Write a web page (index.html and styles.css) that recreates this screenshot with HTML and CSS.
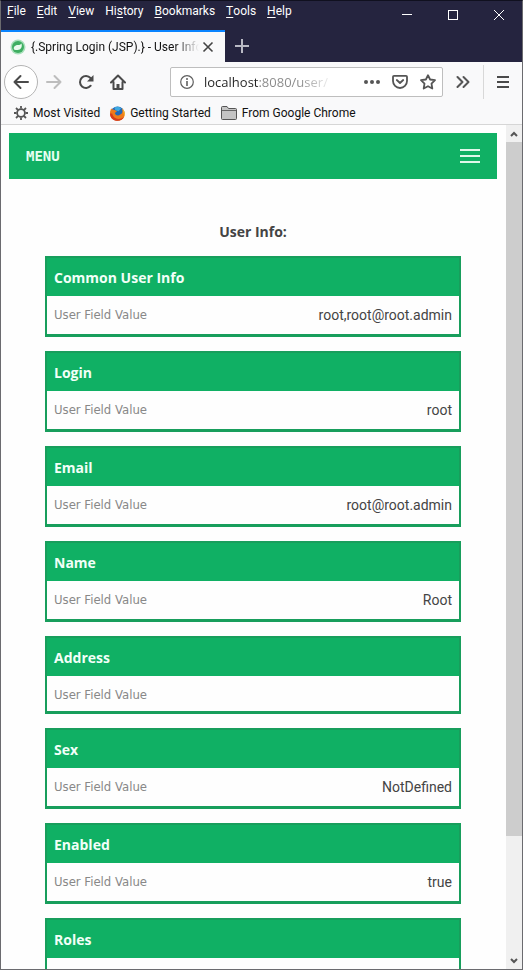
FILE: index.html
```html
<!DOCTYPE html>
<html lang="en">
<head>
<meta charset="utf-8">
<meta name="viewport" content="width=device-width, initial-scale=1">
<title>{.Spring Login (JSP).} - User Info</title>
<link rel="stylesheet" href="styles.css">
</head>
<body>
<div class="window">
  <header class="titlebar">
    <div class="top-row">
      <nav class="app-menu" aria-label="Application">
        <button><u>F</u>ile</button>
        <button><u>E</u>dit</button>
        <button><u>V</u>iew</button>
        <button>Hi<u>s</u>tory</button>
        <button><u>B</u>ookmarks</button>
        <button><u>T</u>ools</button>
        <button><u>H</u>elp</button>
      </nav>
      <div class="window-controls">
        <button aria-label="Minimize"><svg width="10" height="10" viewBox="0 0 10 10"><path d="M0 4.500h10" stroke="#fff"/></svg></button>
        <button aria-label="Maximize"><svg width="10" height="10" viewBox="0 0 10 10"><rect x=".5" y=".5" width="9" height="9" fill="none" stroke="#fff"/></svg></button>
        <button aria-label="Close"><svg width="10" height="10" viewBox="0 0 10 10"><path d="M0 0l10 10M10 0L0 10" stroke="#fff"/></svg></button>
      </div>
    </div>
    <div class="tabs">
      <div class="tab">
        <svg width="16" height="16" viewBox="0 0 16 16"><circle cx="8" cy="8" r="7.500" fill="#a9e0bb"/><circle cx="8" cy="8" r="6" fill="#3fae62"/><path d="M4 10.500c-1-3 1.500-4.500 4-4.500 1.500 0 2.500-.3 3.500-1.500 1 3.500-.5 6.500-4 6.500-1.500 0-2.500 0-3.500-.5z" fill="#e9faee"/></svg>
        <span class="tab-title">{.Spring Login (JSP).} - User Info</span>
        <button class="tab-close" aria-label="Close tab"><svg width="12" height="12" viewBox="0 0 12 12"><path d="M1.500 1.500l9 9M10.500 1.500l-9 9" stroke="#444" stroke-width="1.600"/></svg></button>
      </div>
      <button class="new-tab" aria-label="New tab"><svg width="14" height="14" viewBox="0 0 14 14"><path d="M7 0v14M0 7h14" stroke="#b9b9c4" stroke-width="2"/></svg></button>
    </div>
  </header>

  <div class="toolbar">
    <button class="back" aria-label="Back"><svg width="16" height="16" viewBox="0 0 16 16" fill="none" stroke="#4a4a4a" stroke-width="2" stroke-linecap="round" stroke-linejoin="round"><path d="M15 8H1.500M7.500 2l-6 6 6 6"/></svg></button>
    <button class="tool" aria-label="Forward" disabled><svg width="16" height="16" viewBox="0 0 16 16" fill="none" stroke="#bdbdbd" stroke-width="2" stroke-linecap="round" stroke-linejoin="round"><path d="M1 8h13.500M8.500 2l6 6-6 6"/></svg></button>
    <button class="tool" aria-label="Reload"><svg width="16" height="16" viewBox="0 0 16 16"><path d="M12.700 11.700A6 6 0 1 1 12.500 4" fill="none" stroke="#4a4a4a" stroke-width="2" stroke-linecap="round"/><path d="M15.500 1v6.500H9z" fill="#4a4a4a"/></svg></button>
    <button class="tool" aria-label="Home"><svg width="16" height="16" viewBox="0 0 16 16" fill="none" stroke="#4a4a4a" stroke-width="2" stroke-linecap="round" stroke-linejoin="round"><path d="M1 8.500l7-7 7 7M3.500 8v7h9V8"/><path d="M8 10v4.500" stroke-width="3" stroke-linecap="butt"/></svg></button>
    <div class="urlbar">
      <svg width="14" height="14" viewBox="0 0 14 14"><circle cx="7" cy="7" r="6.300" fill="none" stroke="#5f5f5f" stroke-width="1.200"/><path d="M7 6v5" stroke="#5f5f5f" stroke-width="1.600"/><circle cx="7" cy="3.900" r="1" fill="#5f5f5f"/></svg>
      <input class="url" type="text" aria-label="Address" value="localhost:8080/user/">
      <button aria-label="Page actions"><svg width="16" height="16" viewBox="0 0 16 16" fill="#555"><circle cx="2" cy="8" r="2"/><circle cx="8" cy="8" r="2"/><circle cx="14" cy="8" r="2"/></svg></button>
      <button aria-label="Save to Pocket"><svg width="16" height="16" viewBox="0 0 16 16" fill="none" stroke="#555" stroke-width="1.800" stroke-linecap="round" stroke-linejoin="round"><path d="M2 1.800h12q1 0 1 1V7a7 7 0 0 1-14 0V2.800q0-1 1-1z"/><path d="M4.800 6L8 9l3.200-3"/></svg></button>
      <button aria-label="Bookmark this page"><svg width="16" height="16" viewBox="0 0 16 16" fill="none" stroke="#555" stroke-width="1.800" stroke-linejoin="round"><path d="M8 1.200l2.100 4.300 4.900.7-3.500 3.400.8 4.900L8 12.200l-4.300 2.300.8-4.900L1 6.200l4.900-.7z"/></svg></button>
    </div>
    <button class="more" aria-label="More tools"><svg width="14" height="14" viewBox="0 0 14 14" fill="none" stroke="#555" stroke-width="2" stroke-linecap="round" stroke-linejoin="round"><path d="M1.500 2l5 5-5 5M7.500 2l5 5-5 5"/></svg></button>
    <button class="main-menu" aria-label="Open menu"><svg width="12" height="12" viewBox="0 0 12 12"><path d="M0 1h12M0 6h12M0 11h12" stroke="#4a4a4a" stroke-width="2"/></svg></button>
  </div>

  <nav class="bookmarks" aria-label="Bookmarks">
    <a href="#"><svg width="14" height="14" viewBox="0 0 14 14" fill="none" stroke="#555"><circle cx="7" cy="7" r="3.900" stroke-width="1.800"/><path d="M7 0v2.500M7 11.500V14M0 7h2.500M11.500 7H14M2 2l1.900 1.900M10.100 10.100L12 12M12 2l-1.900 1.900M3.900 10.100L2 12" stroke-width="1.800"/></svg>Most Visited</a>
    <a href="#"><svg width="15" height="15" viewBox="0 0 14 14"><circle cx="7" cy="7" r="6.500" fill="#2268b8"/><path d="M4 1.500c2-1.500 5-1 6.500.5L8 5 5 4z" fill="#3fa9e0"/><path d="M1.200 2C1.500 3 2 3.200 3 3.200c1 .2 2.500.8 3.500 1.800L4.500 6.500C5 9 8 9.500 9.500 8 12 7.500 12 4 11 2c2.500 2 3.500 5 2.200 8A7 7 0 0 1 0 7c0-2 .5-3.500 1.200-5z" fill="#ef7b1c"/><path d="M0 7c0 8 11 9 13.200 3C9 13.500 3 12.500 2 7z" fill="#d93a1c"/><path d="M11 2c2.500 2 3.500 5 2.200 8C13 7 12.500 4 11 2z" fill="#fbc02d"/></svg>Getting Started</a>
    <a href="#"><svg width="16" height="14" viewBox="0 0 16 14"><path d="M.5 12.500v-11q0-1 1-1h4.500l1.500 2h7q1 0 1 1v9q0 1-1 1h-13q-1 0-1-1z" fill="#c4c4c4" stroke="#555"/><path d="M1 4.500h14" stroke="#666"/></svg>From Google Chrome</a>
  </nav>

  <div class="viewport">
    <main class="page">
      <div class="site-menu">
        <span>MENU</span>
        <button aria-label="Toggle menu"><svg width="20" height="14" viewBox="0 0 20 14"><path d="M0 1h20M0 7h20M0 13h20" stroke="#dff8ea" stroke-width="2"/></svg></button>
      </div>
      <h1>User Info:</h1>
      <div class="cards">
        <section class="card"><h2>Common User Info</h2><div class="field"><span class="label">User Field Value</span><span class="value">root,root@root.admin</span></div></section>
        <section class="card"><h2>Login</h2><div class="field"><span class="label">User Field Value</span><span class="value">root</span></div></section>
        <section class="card"><h2>Email</h2><div class="field"><span class="label">User Field Value</span><span class="value">root@root.admin</span></div></section>
        <section class="card"><h2>Name</h2><div class="field"><span class="label">User Field Value</span><span class="value">Root</span></div></section>
        <section class="card"><h2>Address</h2><div class="field"><span class="label">User Field Value</span></div></section>
        <section class="card"><h2>Sex</h2><div class="field"><span class="label">User Field Value</span><span class="value">NotDefined</span></div></section>
        <section class="card"><h2>Enabled</h2><div class="field"><span class="label">User Field Value</span><span class="value">true</span></div></section>
        <section class="card"><h2>Roles</h2><div class="field"></div></section>
      </div>
    </main>
    <div class="scrollbar">
      <button aria-label="Scroll up"><svg width="8" height="6" viewBox="0 0 8 6"><path d="M1 5l3-3 3 3" fill="none" stroke="#555" stroke-width="2"/></svg></button>
      <div class="track"><div class="thumb"></div></div>
      <button aria-label="Scroll down"><svg width="8" height="6" viewBox="0 0 8 6"><path d="M1 1l3 3 3-3" fill="none" stroke="#555" stroke-width="2"/></svg></button>
    </div>
  </div>
</div>
</body>
</html>
```
FILE: styles.css
```css
* { box-sizing: border-box; }

body {
  margin: 0;
  font-family: Roboto, "Open Sans", sans-serif;
  font-size: 12px;
  color: #111;
}

button {
  display: flex;
  align-items: center;
  justify-content: center;
  padding: 0;
  border: 0;
  background: none;
  color: inherit;
  font: inherit;
}

svg { display: block; flex: none; }

.window {
  display: flex;
  flex-direction: column;
  height: 100vh;
  overflow: hidden;
  border: 1px solid #6b6b6f;
  border-top-color: #10101f;
}

/* Title bar */
.titlebar { background: #25243f; color: #fff; }

.top-row {
  display: flex;
  justify-content: space-between;
  height: 29px;
}

.app-menu {
  display: flex;
  gap: 11px;
  height: 20px;
  padding-left: 6px;
}

.app-menu u { text-underline-offset: 2px; }

.window-controls { display: flex; }
.window-controls button { width: 46px; height: 28px; }

.tabs { display: flex; height: 32px; }

.tab {
  display: flex;
  align-items: center;
  width: 224px;
  padding: 0 10px 0 9px;
  gap: 5px;
  border-top: 2px solid #0a84ff;
  background: #f9f9fa;
  color: #111;
}

.tab-title {
  flex: 1;
  min-width: 0;
  margin-right: -3px;
  overflow: hidden;
  white-space: nowrap;
  -webkit-mask-image: linear-gradient(to left, transparent, #000 24px);
  mask-image: linear-gradient(to left, transparent, #000 24px);
}

.tab-close { width: 14px; height: 16px; }
.new-tab { width: 34px; }

/* Navigation toolbar */
.toolbar {
  display: flex;
  align-items: center;
  height: 40px;
  padding-left: 3px;
  background: #f9f9fa;
}

.back {
  width: 34px;
  height: 34px;
  border: 1px solid #b4b4b4;
  border-radius: 50%;
  background: #fff;
}

.tool { width: 32px; height: 32px; }

.urlbar {
  display: flex;
  align-items: center;
  flex: 1;
  min-width: 0;
  height: 30px;
  margin-left: 36px;
  padding: 0 6px 0 9px;
  border: 1px solid #bebebe;
  border-radius: 2px;
  background: #fff;
}

.urlbar button { width: 28px; height: 28px; }
.urlbar button:last-child { width: 16px; margin: 0 0 0 6px; }

.url {
  flex: 1;
  min-width: 0;
  height: 28px;
  margin: 0 22px 0 10px;
  padding: 0;
  border: 0;
  outline: 0;
  font: 13px "Open Sans", "Noto Sans", sans-serif;
  color: transparent;
  background: linear-gradient(to right, #222 55px, #888 55px, #888 95px, transparent 130px);
  -webkit-background-clip: text;
  background-clip: text;
}

.more { width: 40px; height: 32px; }

.main-menu {
  width: 39px;
  height: 34px;
  border-left: 1px solid #d8d8d8;
}

/* Bookmarks toolbar */
.bookmarks {
  display: flex;
  gap: 10px;
  height: 23px;
  padding: 0 13px;
  border-bottom: 1px solid #d6d6d6;
  background: #f9f9fa;
}

.bookmarks a {
  display: flex;
  align-items: center;
  gap: 5px;
  color: #111;
  text-decoration: none;
  white-space: nowrap;
}

/* Web page */
.viewport {
  display: flex;
  flex: 1;
  min-height: 0;
  background: #fefefe;
}

.page {
  flex: 1;
  min-width: 0;
  overflow: hidden;
  padding: 8px 9px 8px 8px;
  font-family: "Open Sans", "Noto Sans", sans-serif;
}

.site-menu {
  display: flex;
  align-items: center;
  justify-content: space-between;
  height: 46px;
  padding: 0 17px;
  background: #10b064;
  color: #e6fff1;
  font: bold 14px "DejaVu Sans Mono", monospace;
}

h1 {
  margin: 42px 0 14px;
  font-size: 14px;
  line-height: 21px;
  text-align: center;
  color: #444;
}

.cards {
  display: flex;
  flex-direction: column;
  gap: 14px;
  margin: 0 36px;
}

.card {
  border: 2px solid #189e5c;
  border-bottom-width: 3px;
}

h2 {
  margin: 0;
  padding: 10px 7px 8px;
  background: #10b064;
  color: #f2fff8;
  font-size: 14px;
  line-height: 20px;
}

.field {
  display: flex;
  align-items: flex-start;
  justify-content: space-between;
  min-height: 35px;
  padding: 8px 7px 7px;
}

.label {
  padding-top: 2px;
  color: #888;
  font-family: "DejaVu Sans Condensed", "Open Sans", sans-serif;
  font-size: 13px;
  line-height: 18px;
}

.value {
  color: #444;
  font-family: Roboto, "Open Sans", sans-serif;
  font-size: 14px;
  line-height: 23px;
}

/* Scrollbar */
.scrollbar {
  display: flex;
  flex-direction: column;
  width: 16px;
  background: #f0f0f0;
}

.scrollbar button { height: 17px; }

.track {
  display: grid;
  grid-template-rows: 6fr 1fr;
  flex: 1;
}

.thumb { background: #cdcdcd; }
```
